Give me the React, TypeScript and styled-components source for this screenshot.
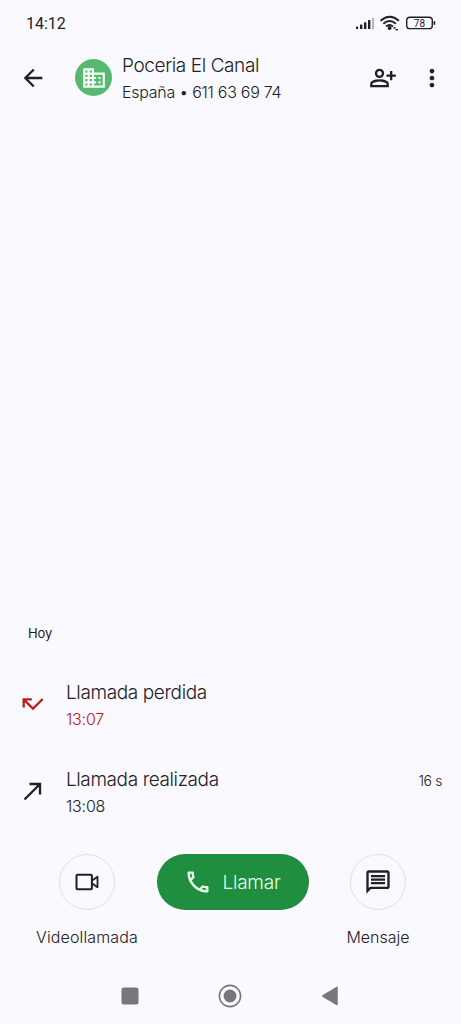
import React from 'react';
import styled, { createGlobalStyle } from 'styled-components';

const Global = createGlobalStyle`
  * { box-sizing: border-box; }
  body { margin: 0; background: #f9f9ff; }
`;

const Screen = styled.main`
  display: flex;
  flex-direction: column;
  width: 461px;
  height: 1024px;
  overflow: hidden;
  background: #f9f9ff;
  color: #1f2026;
  font-family: Inter, Roboto, sans-serif;
  font-weight: 300;
`;

const Label = styled.span<{ $size: number; $line: number; $track?: number; $color?: string; $weight?: number }>`
  display: block;
  font-size: ${p => p.$size}px;
  line-height: ${p => p.$line}px;
  letter-spacing: ${p => p.$track ?? 0}px;
  color: ${p => p.$color ?? 'inherit'};
  font-weight: ${p => p.$weight ?? 300};
  white-space: nowrap;
`;

const Clock = styled(Label)`
  padding-top: 2px;
  font-family: Roboto, sans-serif;
`;

const StatusBar = styled.div`
  display: flex;
  align-items: center;
  justify-content: space-between;
  height: 46px;
  padding: 0 25px 0 26px;
`;

const StatusIcons = styled.div`
  display: flex;
  align-items: center;
`;

const AppBar = styled.header`
  display: flex;
  align-items: center;
  height: 63px;
  padding: 0 15px 0 19px;
`;

const Avatar = styled.div`
  display: flex;
  align-items: center;
  justify-content: center;
  width: 37px;
  height: 37px;
  margin: 0 10px 0 28px;
  border-radius: 50%;
  background: #57b872;
`;

const Contact = styled.div`
  flex: 1;
  padding-top: 2px;
`;

const AddButton = styled.div`
  display: flex;
  margin-right: 21px;
`;

const History = styled.section`
  display: flex;
  flex-direction: column;
  justify-content: flex-end;
  flex: 1;
`;

const DayHeading = styled.div`
  padding: 0 28px 18px;
`;

const CallRow = styled.div`
  display: flex;
  align-items: center;
  height: 87px;
  padding: 0 19px;
`;

const CallText = styled.div`
  flex: 1;
  margin-left: 19px;
  padding-top: 4px;
`;

const Duration = styled.div`
  padding-bottom: 19px;
`;

const Actions = styled.div`
  display: grid;
  grid-template-columns: 139px 152px 139px;
  justify-content: center;
  justify-items: center;
  height: 120px;
  margin-top: 20px;
  padding-left: 4px;
`;

const Action = styled.div`
  display: flex;
  flex-direction: column;
  align-items: center;
  gap: 15px;
`;

const RoundButton = styled.div`
  display: flex;
  align-items: center;
  justify-content: center;
  width: 56px;
  height: 56px;
  border: 1px solid #dfdfe5;
  border-radius: 50%;
`;

const CallButton = styled.div`
  display: flex;
  align-items: center;
  justify-content: center;
  gap: 10px;
  width: 152px;
  height: 56px;
  border-radius: 28px;
  background: #1f8e3e;
  color: #e6ffe9;
`;

const NavBar = styled.nav`
  display: flex;
  align-items: center;
  justify-content: center;
  gap: 76px;
  height: 50px;
  padding: 0 2px 6px 0;
`;

const Icon = ({ d, color = '#1f2026', size = 28 }: { d: string; color?: string; size?: number }) => (
  <svg width={size} height={size} viewBox="0 0 24 24" fill={color}><path d={d} /></svg>
);

const BACK = 'M20 11H7.83l5.59-5.59L12 4l-8 8 8 8 1.41-1.41L7.83 13H20v-2z';
const BUSINESS = 'M12 7V3H2v18h20V7H12zM6 19H4v-2h2v2zm0-4H4v-2h2v2zm0-4H4V9h2v2zm0-4H4V5h2v2zm4 12H8v-2h2v2zm0-4H8v-2h2v2zm0-4H8V9h2v2zm0-4H8V5h2v2zm10 12h-8v-2h2v-2h-2v-2h2v-2h-2V9h8v10zm-2-8h-2v2h2v-2zm0 4h-2v2h2v-2z';
const MORE = 'M12 8c1.1 0 2-.9 2-2s-.9-2-2-2-2 .9-2 2 .9 2 2 2zm0 2c-1.1 0-2 .9-2 2s.9 2 2 2 2-.9 2-2-.9-2-2-2zm0 6c-1.1 0-2 .9-2 2s.9 2 2 2 2-.9 2-2-.9-2-2-2z';
const MISSED = 'M19.59 7L12 14.59 6.41 9H11V7H3v8h2v-4.59l7 7 9-9z';
const MADE = 'M9 5v2h6.59L4 18.59 5.41 20 17 8.41V15h2V5z';
const PHONE = 'M6.54 5c.06.89.21 1.76.45 2.59l-1.2 1.2c-.41-1.2-.67-2.47-.76-3.79h1.51m9.86 12.02c.85.24 1.72.39 2.6.45v1.49c-1.32-.09-2.59-.35-3.8-.75l1.2-1.19M7.5 3H4c-.55 0-1 .45-1 1 0 9.39 7.61 17 17 17 .55 0 1-.45 1-1v-3.49c0-.55-.45-1-1-1-1.24 0-2.45-.2-3.57-.57-.1-.04-.21-.05-.31-.05-.26 0-.51.1-.71.29l-2.2 2.2c-2.83-1.45-5.15-3.76-6.59-6.59l2.2-2.2c.28-.28.36-.67.25-1.02C8.7 6.45 8.5 5.25 8.5 4c0-.55-.45-1-1-1z';
const MESSAGE = 'M4 4h16v12H5.17L4 17.17V4m0-2c-1.1 0-1.99.9-1.99 2L2 22l4-4h14c1.1 0 2-.9 2-2V4c0-1.1-.9-2-2-2H4zm2 10h12v2H6v-2zm0-3h12v2H6V9zm0-3h12v2H6V6z';
const ADD_PERSON = 'M720-400v-120H600v-80h120v-120h80v120h120v80H800v120h-80Zm-360-80q-66 0-113-47t-47-113q0-66 47-113t113-47q66 0 113 47t47 113q0 66-47 113t-113 47ZM40-160v-112q0-34 17.5-62.5T104-378q62-31 126-46.5T360-440q66 0 130 15.5T616-378q29 15 46.5 43.5T680-272v112H40Zm80-80h480v-32q0-11-5.5-20T580-306q-54-27-109-40.5T360-360q-56 0-111 13.5T140-306q-9 5-14.5 14t-5.5 20v32Zm240-320q33 0 56.5-23.5T440-640q0-33-23.5-56.5T360-720q-33 0-56.5 23.5T280-640q0 33 23.5 56.5T360-560Z';

export default function App() {
  return (
    <Screen>
      <Global />
      <StatusBar>
        <Clock $size={16} $line={22} $weight={400}>14:12</Clock>
        <StatusIcons>
          <svg width="81" height="18" viewBox="355 14 81 18">
            <g fill="#1f2026">
              <rect x="356" y="26.5" width="2.2" height="2.5" rx=".6" />
              <rect x="360" y="24.5" width="2.4" height="4.5" rx=".6" />
              <rect x="364" y="22.2" width="2.4" height="6.8" rx=".6" />
              <rect x="368" y="20" width="2.4" height="9" rx=".6" />
              <rect x="372" y="17.8" width="2" height="11.2" rx=".6" fill="#b5b5bd" />
              <circle cx="389.6" cy="28" r="2" />
              <path d="M394.5 26.5l1.7 2h-3.4zM396.8 31l-1.7-2h3.4z" />
            </g>
            <g fill="none" stroke="#1f2026" strokeWidth="1.9">
              <path d="M380.5 20.8q9.2-8 18.4 0M383.3 23.8q6.3-5.4 12.6 0M386 26.4q3.5-2.8 7 0" />
              <rect x="406.7" y="17.2" width="25.6" height="11.4" rx="3.2" strokeWidth="1.4" />
            </g>
            <rect x="433.6" y="21" width="1.6" height="4" rx=".8" fill="#1f2026" />
            <text x="419.4" y="26.7" textAnchor="middle" fontSize="10" fontFamily="Roboto, sans-serif" fontWeight="400" fill="#1f2026">78</text>
          </svg>
        </StatusIcons>
      </StatusBar>
      <AppBar>
        <Icon d={BACK} />
        <Avatar><Icon d={BUSINESS} color="#f4fff6" size={26} /></Avatar>
        <Contact>
          <Label $size={19} $line={27} $track={-0.4}>Poceria El Canal</Label>
          <Label $size={16} $line={26} $track={-0.27}>España • 611 63 69 74</Label>
        </Contact>
        <AddButton>
          <svg width="28" height="28" viewBox="0 -960 960 960" fill="#1f2026"><path d={ADD_PERSON} /></svg>
        </AddButton>
        <Icon d={MORE} />
      </AppBar>
      <History>
        <DayHeading><Label $size={13} $line={18} $weight={400} $track={-0.1}>Hoy</Label></DayHeading>
        <CallRow>
          <Icon d={MISSED} color="#b9201c" />
          <CallText>
            <Label $size={19} $line={27} $track={-0.38}>Llamada perdida</Label>
            <Label $size={16} $line={26} $track={-0.2} $color="#b9201c">13:07</Label>
          </CallText>
        </CallRow>
        <CallRow>
          <Icon d={MADE} />
          <CallText>
            <Label $size={19} $line={27} $track={-0.4}>Llamada realizada</Label>
            <Label $size={16} $line={26} $track={-0.2}>13:08</Label>
          </CallText>
          <Duration><Label $size={14} $line={20} $track={-0.4}>16 s</Label></Duration>
        </CallRow>
      </History>
      <Actions>
        <Action>
          <RoundButton>
            <svg width="28" height="28" viewBox="0 0 28 28" fill="none" stroke="#1f2026" strokeWidth="2" strokeLinejoin="round">
              <rect x="3.5" y="6.7" width="15.4" height="14.6" rx="1" />
              <path d="M19.2 12.6l5.3-3.8v10.4l-5.3-3.8" strokeWidth="1.8" />
            </svg>
          </RoundButton>
          <Label $size={16} $line={24} $track={0.12}>Videollamada</Label>
        </Action>
        <CallButton>
          <Icon d={PHONE} color="#e6ffe9" />
          <Label $size={19} $line={27} $track={-0.2}>Llamar</Label>
        </CallButton>
        <Action>
          <RoundButton><Icon d={MESSAGE} /></RoundButton>
          <Label $size={16} $line={24}>Mensaje</Label>
        </Action>
      </Actions>
      <NavBar>
        <svg width="24" height="24"><rect x="3.5" y="3.5" width="17" height="17" rx="2.5" fill="#77777c" /></svg>
        <svg width="24" height="24"><circle cx="12" cy="12" r="10.6" fill="none" stroke="#77777c" strokeWidth="1.6" /><circle cx="12" cy="12" r="6.4" fill="#77777c" /></svg>
        <svg width="24" height="24"><path d="M4.8 12L19 3.4v17.2z" fill="#77777c" stroke="#77777c" strokeWidth="1.5" strokeLinejoin="round" /></svg>
      </NavBar>
    </Screen>
  );
}
